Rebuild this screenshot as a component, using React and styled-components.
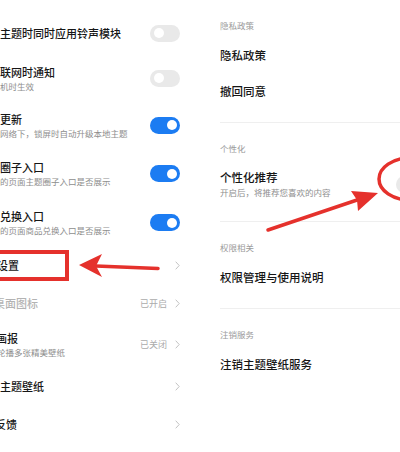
import React from 'react';
import styled, { createGlobalStyle } from 'styled-components';

const GlobalStyle = createGlobalStyle`
  html, body {
    margin: 0;
    padding: 0;
    background: #fff;
  }
  body {
    font-family: "Noto Sans CJK SC", "Noto Sans", sans-serif;
  }
`;

const Screen = styled.div`
  position: relative;
  width: 400px;
  height: 452px;
  overflow: hidden;
  display: flex;
  background: #fff;
`;

const LeftPane = styled.div`
  width: 200px;
  flex: none;
  box-sizing: border-box;
  padding: 11px 20px 0 0;
  display: flex;
  flex-direction: column;
`;

const Row = styled.div`
  height: ${p => p.h}px;
  flex: none;
  display: flex;
  align-items: center;
  justify-content: space-between;
`;

const TextCol = styled.div`
  display: flex;
  flex-direction: column;
  min-width: 0;
`;

const Title = styled.div`
  font-size: 11px;
  line-height: 14px;
  font-weight: 500;
  color: ${p => (p.muted ? '#b3b3b3' : '#161616')};
  white-space: nowrap;
  margin-left: ${p => p.shift || 0}px;
`;

const Sub = styled.div`
  font-size: 8.5px;
  line-height: 12px;
  color: #8e8e8e;
  white-space: nowrap;
  margin-top: 1px;
  margin-left: ${p => p.shift || 0}px;
`;

const Toggle = styled.div`
  width: 30px;
  height: 17px;
  flex: none;
  box-sizing: border-box;
  border-radius: 9px;
  padding: 0 3.5px;
  display: flex;
  align-items: center;
  justify-content: ${p => (p.on ? 'flex-end' : 'flex-start')};
  background: ${p => (p.on ? '#1c7cf2' : '#e9e9e9')};
`;

const Knob = styled.div`
  width: 10px;
  height: 10px;
  border-radius: 50%;
  background: #fff;
`;

const Trail = styled.div`
  display: flex;
  align-items: center;
  gap: 8px;
`;

const Value = styled.span`
  font-size: 9px;
  color: #ababab;
`;

const RightPane = styled.div`
  width: 236px;
  flex: none;
  box-sizing: border-box;
  padding: 0 10px 0 20px;
  display: flex;
  flex-direction: column;
`;

const Section = styled.div`
  padding-bottom: 13px;
  border-bottom: ${p => (p.last ? 'none' : '1px solid #efefef')};
`;

const Header = styled.div`
  margin-top: 13px;
  height: 24px;
  line-height: 24px;
  font-size: 8.5px;
  color: #9b9b9b;
`;

const ItemTitle = styled.div`
  font-size: 11.5px;
  line-height: 15px;
  font-weight: 500;
  color: #161616;
  white-space: nowrap;
`;

const Overlay = styled.svg`
  position: absolute;
  left: 0;
  top: 0;
  pointer-events: none;
`;

function Chevron() {
  return (
    <svg width="5" height="9" viewBox="0 0 5 9">
      <path d="M0.7 0.7 L4.2 4.5 L0.7 8.3" fill="none" stroke="#c2c2c2" strokeWidth="1" />
    </svg>
  );
}

const leftRows = [
  { h: 44, title: '主题时同时应用铃声模块', toggle: false },
  { h: 46, title: '联网时通知', sub: '机时生效', toggle: false },
  { h: 48, title: '更新', sub: '网络下，锁屏时自动升级本地主题', toggle: true },
  { h: 49, title: '圈子入口', sub: '的页面主题圈子入口是否展示', toggle: true },
  { h: 49, title: '兑换入口', sub: '的页面商品兑换入口是否展示', toggle: true },
  { h: 36, title: '设置', shift: -3, chevron: true },
  { h: 40, title: '桌面图标', shift: -6, muted: true, value: '已开启', chevron: true },
  { h: 43, title: '画报', shift: -4, sub: '轮播多张精美壁纸', subShift: -3, value: '已关闭', chevron: true },
  { h: 40, title: '主题壁纸', chevron: true },
  { h: 36, title: '反馈', shift: -5, chevron: true },
];

const sections = [
  { header: '隐私政策', items: [{ title: '隐私政策' }, { title: '撤回同意' }] },
  { header: '个性化', items: [{ title: '个性化推荐', sub: '开启后，将推荐您喜欢的内容', toggle: true }] },
  { header: '权限相关', items: [{ title: '权限管理与使用说明' }] },
  { header: '注销服务', items: [{ title: '注销主题壁纸服务' }] },
];

export default function App() {
  return (
    <>
      <GlobalStyle />
      <Screen>
        <LeftPane>
          {leftRows.map((r, i) => (
            <Row key={i} h={r.h}>
              <TextCol>
                <Title shift={r.shift} muted={r.muted}>{r.title}</Title>
                {r.sub && <Sub shift={r.subShift}>{r.sub}</Sub>}
              </TextCol>
              {r.toggle !== undefined && (
                <Toggle on={r.toggle}>
                  <Knob />
                </Toggle>
              )}
              {r.chevron && (
                <Trail>
                  {r.value && <Value>{r.value}</Value>}
                  <Chevron />
                </Trail>
              )}
            </Row>
          ))}
        </LeftPane>

        <RightPane>
          {sections.map((s, i) => (
            <Section key={i} last={i === sections.length - 1}>
              <Header>{s.header}</Header>
              {s.items.map((it, j) => (
                <Row key={j} h={it.sub ? 48 : 36}>
                  <TextCol>
                    <ItemTitle>{it.title}</ItemTitle>
                    {it.sub && <Sub>{it.sub}</Sub>}
                  </TextCol>
                  {it.toggle && (
                    <Toggle on={false}>
                      <Knob />
                    </Toggle>
                  )}
                </Row>
              ))}
            </Section>
          ))}
        </RightPane>

        <Overlay width="400" height="452" viewBox="0 0 400 452">
          <rect x="-4" y="252" width="71" height="27" fill="none" stroke="#e5312c" strokeWidth="4" />
          <line x1="96" y1="266" x2="158" y2="268.5" stroke="#e5312c" strokeWidth="3.5" strokeLinecap="round" />
          <polygon points="79,265 102,254 96,266 102,277" fill="#e5312c" />
          <line x1="268" y1="230" x2="360" y2="199" stroke="#e5312c" strokeWidth="3.5" strokeLinecap="round" />
          <polygon points="378,193 351,191 357,200 358,211" fill="#e5312c" />
          <ellipse cx="410" cy="179" rx="31" ry="21" fill="none" stroke="#e5312c" strokeWidth="3.5" />
        </Overlay>
      </Screen>
    </>
  );
}
